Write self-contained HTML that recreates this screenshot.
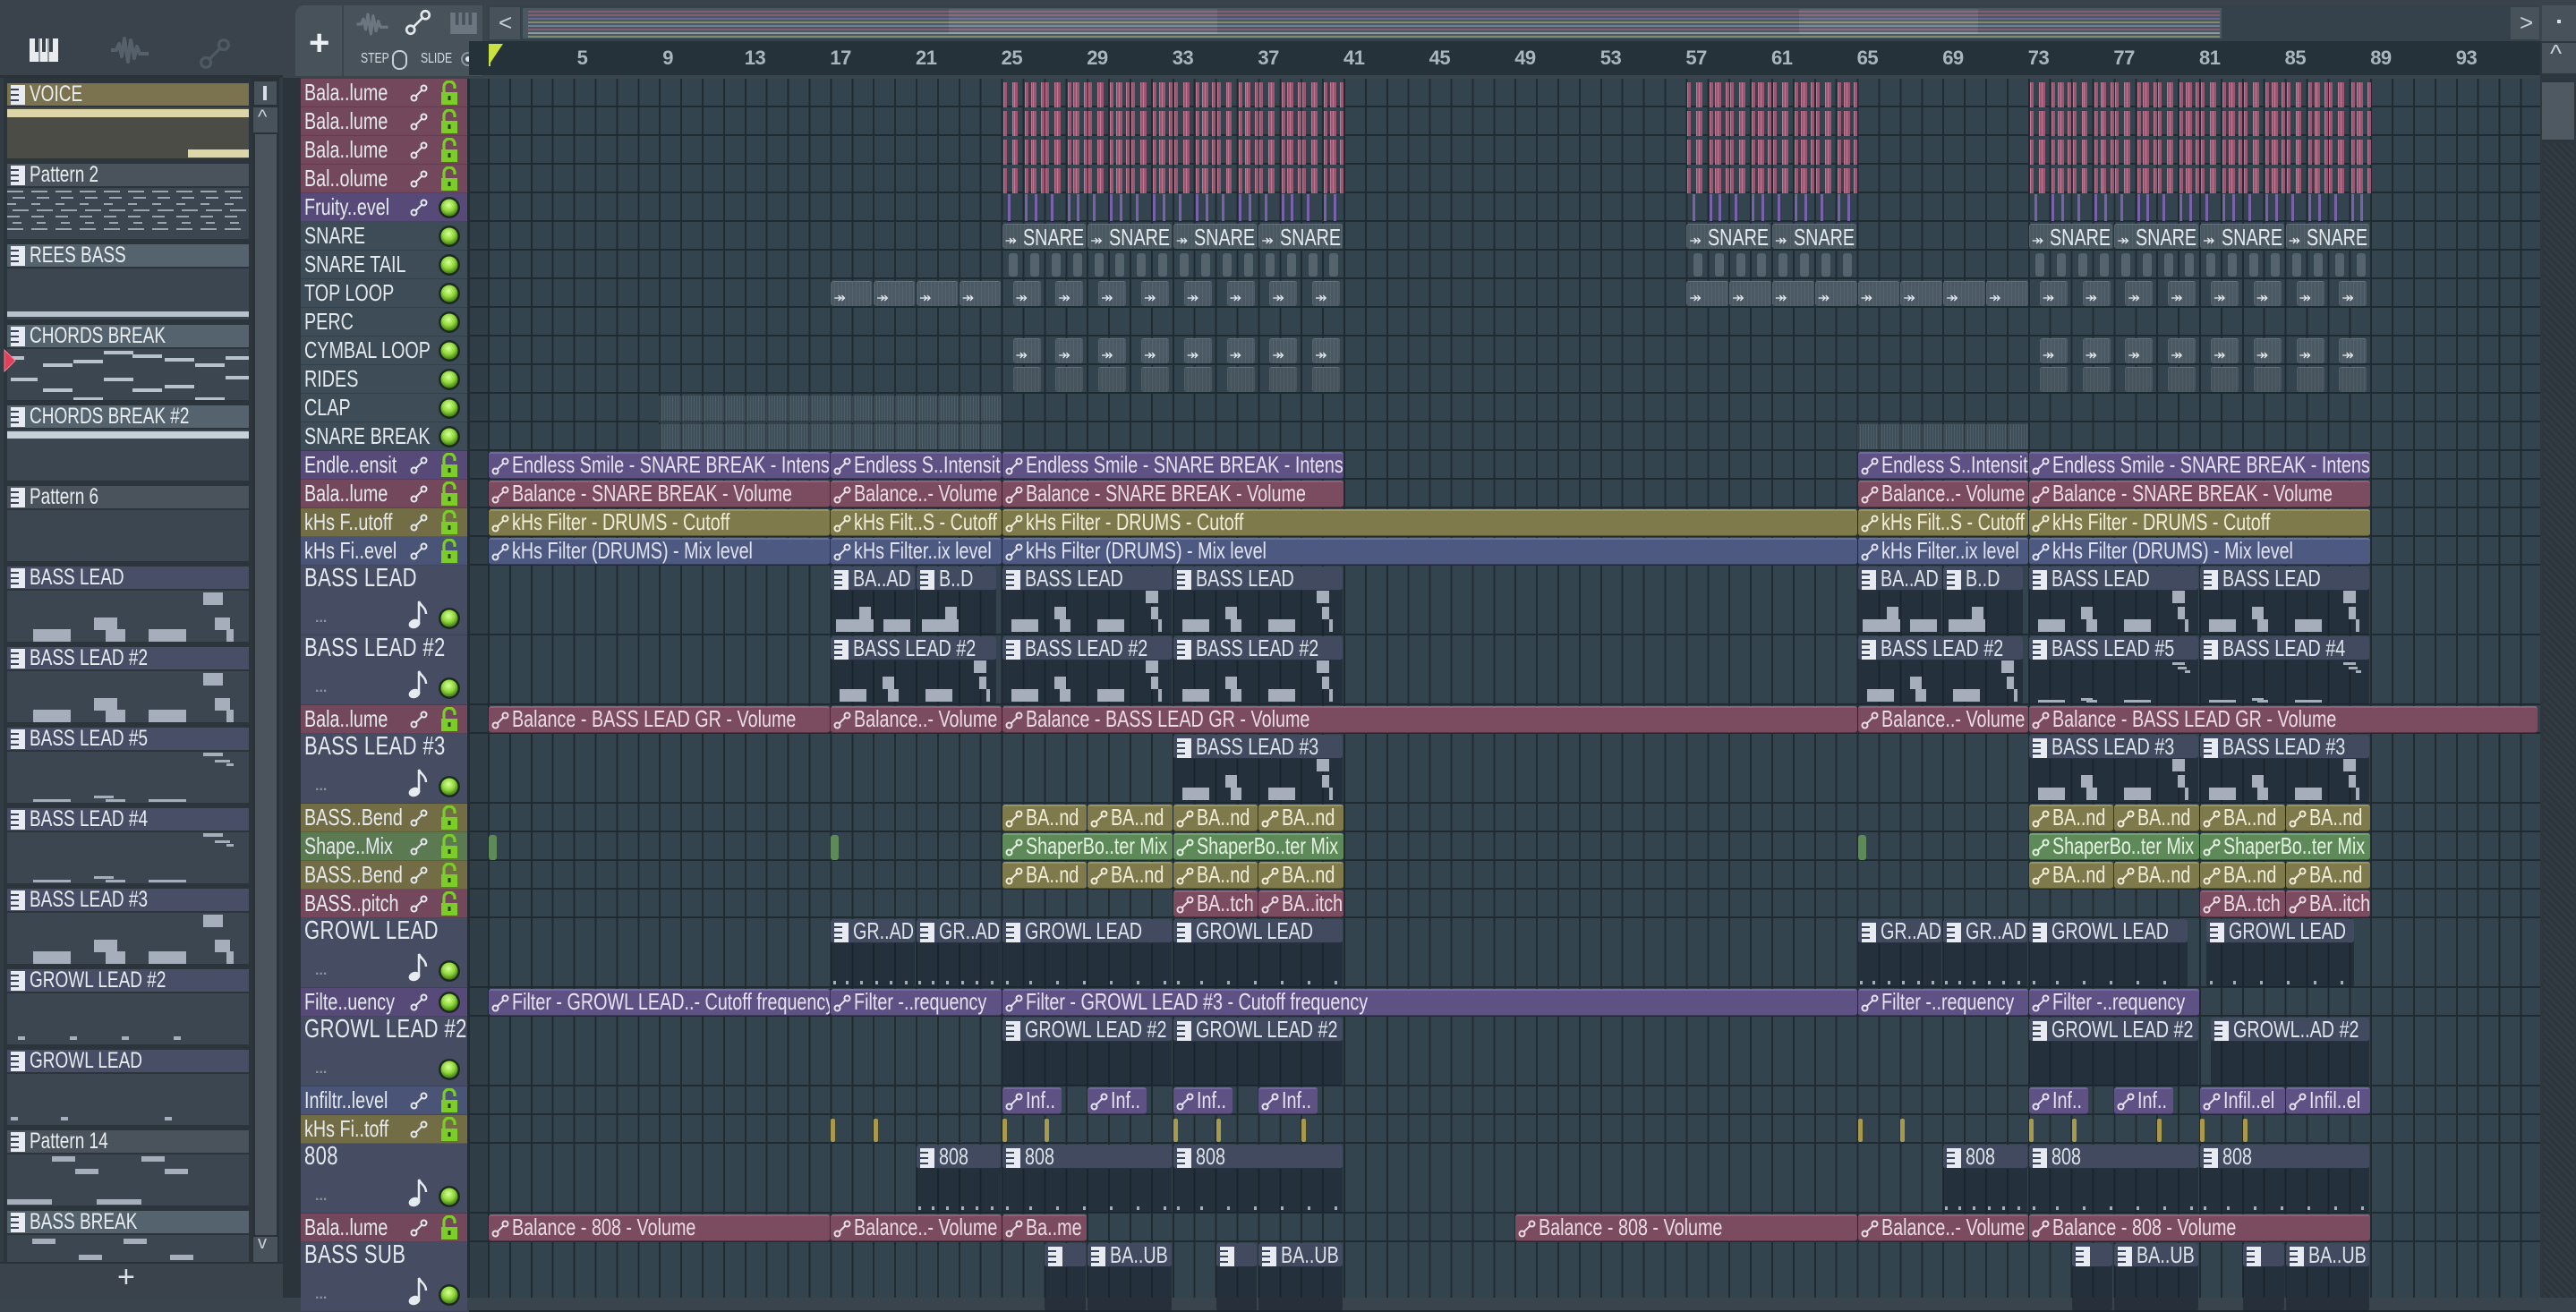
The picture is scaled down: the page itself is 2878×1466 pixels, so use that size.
<!DOCTYPE html>
<html><head><meta charset="utf-8">
<style>
*{box-sizing:border-box;margin:0;padding:0}
body{width:2878px;height:1450px;overflow:hidden;background:#3a444c;font-family:"Liberation Sans Narrow","Liberation Sans",sans-serif;color:#dfe5ea;position:relative}
.a{position:absolute}
.n{display:inline-block;transform:scaleX(.76);transform-origin:0 50%;white-space:nowrap}
</style></head><body>
<div id="root"></div>
<script>
const R=document.getElementById('root');
function d(x,y,w,h,bg,extra){const e=document.createElement('div');e.className='a';e.style.cssText=`left:${x}px;top:${y}px;width:${w}px;height:${h}px;${bg?'background:'+bg+';':''}${extra||''}`;R.appendChild(e);return e;}
function txt(x,y,s,size,col,extra){const e=d(x,y,null,null,null,`font-size:${size}px;color:${col};white-space:nowrap;${extra||''}`);e.style.width='';e.style.height='';e.textContent=s;return e;}
function ntxt(x,y,s,size,col,extra){const e=txt(x,y,'',size,col,extra);e.innerHTML=`<span class="n">${s}</span>`;return e;}
const autoIco=(c)=>`<svg width="20" height="20" viewBox="0 0 20 20" style="vertical-align:-3px;margin-right:3px"><circle cx="4.5" cy="15.5" r="3" fill="none" stroke="${c}" stroke-width="2"/><circle cx="15.5" cy="4.5" r="3" fill="none" stroke="${c}" stroke-width="2"/><line x1="6.7" y1="13.3" x2="13.3" y2="6.7" stroke="${c}" stroke-width="2"/></svg>`;
const patIco=`<svg width="16" height="22" viewBox="0 0 16 22" style="vertical-align:-4px;margin-right:5px"><rect x="0" y="0" width="16" height="22" fill="#e8ecf2"/><rect x="0" y="4" width="9" height="2" fill="#3a4458"/><rect x="0" y="10" width="9" height="2" fill="#3a4458"/><rect x="0" y="16" width="9" height="2" fill="#3a4458"/></svg>`;
const led=`<svg width="26" height="26" viewBox="0 0 26 26"><defs><radialGradient id="g" cx="45%" cy="35%" r="60%"><stop offset="0" stop-color="#d8ff9a"/><stop offset=".6" stop-color="#8ed83a"/><stop offset="1" stop-color="#4f8a1a"/></radialGradient></defs><circle cx="13" cy="13" r="12" fill="#1d2a22"/><circle cx="13" cy="13" r="9.5" fill="url(#g)"/></svg>`;
const lock=`<svg width="20" height="28" viewBox="0 0 20 28"><path d="M4 13V7a6 6 0 0 1 12 0v2" fill="none" stroke="#7ccc2a" stroke-width="3.2"/><rect x="1" y="13" width="18" height="14" fill="#7ccc2a"/><rect x="8.5" y="17" width="3" height="5" fill="#2a3a20"/></svg>`;
const note=`<svg width="22" height="34" viewBox="0 0 22 34"><ellipse cx="7" cy="27" rx="6.5" ry="5" fill="#e6ebef" transform="rotate(-20 7 27)"/><path d="M12 27V2c2 5 8 7 8 14" fill="none" stroke="#e6ebef" stroke-width="2.5"/></svg>`;

d(0,0,334,85,'#3a434b');
d(0,84,316,3,'#2a3238');
R.insertAdjacentHTML('beforeend',`<svg class="a" style="left:33px;top:43px" width="32" height="26" viewBox="0 0 32 26"><rect width="32" height="26" fill="#e8ecef"/><rect x="6" y="0" width="4" height="15" fill="#3a434b"/><rect x="14" y="0" width="4" height="15" fill="#3a434b"/><rect x="22" y="0" width="4" height="15" fill="#3a434b"/><rect x="10.5" y="0" width="1" height="26" fill="#3a434b"/><rect x="20.5" y="0" width="1" height="26" fill="#3a434b"/></svg>`);
R.insertAdjacentHTML('beforeend',`<svg class="a" style="left:122px;top:38px" width="46" height="36" viewBox="0 0 46 36"><path d="M2 18h6l3-7 3 14 3-20 4 26 3-24 4 20 3-13 3 8h10" fill="none" stroke="#55606a" stroke-width="4" stroke-linejoin="round"/></svg>`);
R.insertAdjacentHTML('beforeend',`<svg class="a" style="left:222px;top:42px" width="36" height="36" viewBox="0 0 20 20"><circle cx="4.5" cy="15.5" r="3" fill="none" stroke="#4e5962" stroke-width="1.8"/><circle cx="15.5" cy="4.5" r="3" fill="none" stroke="#4e5962" stroke-width="1.8"/><line x1="6.7" y1="13.3" x2="13.3" y2="6.7" stroke="#4e5962" stroke-width="1.8"/></svg>`);

d(0,87,316,1325,'#323c44');
d(4,87,278,1323,'#2c353c');
const pats=[['VOICE','sel'],['Pattern 2','dash'],['REES BASS','rees'],['CHORDS BREAK','ch'],['CHORDS BREAK #2','line'],['Pattern 6','none'],['BASS LEAD','bl'],['BASS LEAD #2','bl'],['BASS LEAD #5','thin'],['BASS LEAD #4','thin'],['BASS LEAD #3','bl'],['GROWL LEAD #2','dots'],['GROWL LEAD','dots2'],['Pattern 14','p14'],['BASS BREAK','bb']];
pats.forEach((p,i)=>{
  const y=93+i*90;
  if(y>1410)return;
  const sel=p[1]=='sel';
  const hbg=sel?'#7b7350':(['REES BASS','CHORDS BREAK','CHORDS BREAK #2','BASS BREAK'].includes(p[0])?'#55636f':(p[0].startsWith('Pattern')?'#4a535c':'#474e66'));
  const h=Math.min(25,1410-y);
  const hd=d(8,y,270,h,hbg,'font-size:25px;line-height:25px;padding-left:4px;color:#e8edf0;overflow:hidden;white-space:nowrap');
  hd.innerHTML=patIco+`<span class="n">${p[0]}</span>`;
  const by=y+27, bh=Math.min(57,1410-by);
  if(bh<=0)return;
  const body=d(8,by,270,bh,sel?'#4a4c45':'#3b4650','overflow:hidden');
  const bar=(x,yy,w,hh,c)=>{const e=document.createElement('div');e.className='a';e.style.cssText=`left:${x}px;top:${yy}px;width:${w}px;height:${hh}px;background:${c||'#a6aebb'}`;body.appendChild(e);};
  if(sel){bar(0,2,270,9,'#ddd6a8');bar(202,47,68,9,'#ddd6a8');}
  if(p[1]=='dash'){for(let r=0;r<7;r++)for(let k=0;k<10;k++)bar(k*27+(r%2)*6,3+r*7,18-(r%3)*4,2,'#9aa3ae');}
  if(p[1]=='rees'){bar(0,48,270,6,'#b7c2cc');}
  if(p[1]=='ch'){const pos=[[4,8,15],[40,16,33],[74,12,33],[108,2,33],[140,6,33],[176,10,33],[210,16,33],[244,8,26],[4,32,30],[108,32,33],[176,40,33],[244,30,26],[40,44,33],[140,44,33],[74,54,33],[210,54,33]];pos.forEach(q=>bar(q[0],q[1],q[2],4,'#b7c2cc'));}
  if(p[1]=='line'){bar(0,2,270,8,'#c8d1d8');}
  if(p[1]=='bl'){bar(29,43,42,14);bar(97,30,26,14);bar(110,43,22,14);bar(158,43,42,14);bar(219,2,22,14);bar(232,30,17,14);bar(245,43,8,14);}
  if(p[1]=='thin'){bar(219,1,22,4);bar(232,9,17,3);bar(245,13,8,3);bar(29,53,42,3);bar(97,49,22,3);bar(110,53,22,3);bar(158,53,42,3);}
  if(p[1]=='dots'){[12,70,128,186].forEach(x=>bar(x,48,8,4));}
  if(p[1]=='dots2'){[4,60,176].forEach(x=>bar(x,48,8,4));}
  if(p[1]=='p14'){bar(50,2,26,6);bar(150,2,26,6);bar(76,16,26,6);bar(176,16,26,6);bar(0,50,50,6);bar(100,50,50,6);}
  if(p[1]=='bb'){bar(28,4,26,6);bar(130,4,26,6);bar(80,22,26,6);bar(182,22,26,6);}
});
R.insertAdjacentHTML('beforeend',`<svg class="a" style="left:4px;top:390px" width="14" height="26"><path d="M1 1L13 13L1 25Z" fill="#e0405a" stroke="#f08090"/></svg>`);
d(282,87,30,1323,'#2a3238');
d(283,90,27,28,'#48525b','border:1px solid #2a3238');d(294,96,4,16,'#dde');
d(283,120,27,28,'#48525b');txt(288,118,'^',22,'#c8d0d6');
d(285,150,24,1230,'#4b545c');
d(283,1382,27,28,'#48525b');txt(288,1378,'v',20,'#c8d0d6');
d(0,1410,316,40,'#3a434b','border-top:2px solid #2a3238');
txt(131,1408,'+',34,'#dbe1e6');
d(316,87,20,1363,'#2b343b');

d(316,0,2562,6,'#3a434b');
d(330,6,52,79,'#48525b','border-radius:10px 0 0 0');
txt(345,26,'+',40,'#eef1f4','font-weight:bold');
d(384,6,155,79,'#48525b');
R.insertAdjacentHTML('beforeend',`<svg class="a" style="left:396px;top:12px" width="40" height="30" viewBox="0 0 46 36"><path d="M2 18h6l3-7 3 14 3-20 4 26 3-24 4 20 3-13 3 8h10" fill="none" stroke="#6b7680" stroke-width="4" stroke-linejoin="round"/></svg>`);
R.insertAdjacentHTML('beforeend',`<svg class="a" style="left:452px;top:10px" width="30" height="30" viewBox="0 0 20 20"><circle cx="4.5" cy="15.5" r="3" fill="none" stroke="#e2e7eb" stroke-width="1.8"/><circle cx="15.5" cy="4.5" r="3" fill="none" stroke="#e2e7eb" stroke-width="1.8"/><line x1="6.7" y1="13.3" x2="13.3" y2="6.7" stroke="#e2e7eb" stroke-width="1.8"/></svg>`);
R.insertAdjacentHTML('beforeend',`<svg class="a" style="left:503px;top:14px" width="30" height="24" viewBox="0 0 32 26"><rect width="32" height="26" fill="#6b7680"/><rect x="6" y="0" width="4" height="15" fill="#48525b"/><rect x="14" y="0" width="4" height="15" fill="#48525b"/><rect x="22" y="0" width="4" height="15" fill="#48525b"/></svg>`);
ntxt(403,57,'STEP',16,'#d6dde2');d(438,56,17,22,null,'border:2px solid #c8d0d6;border-radius:8px');
ntxt(470,57,'SLIDE',16,'#d6dde2');d(515,58,16,16,null,'border:2px solid #8a949c;border-radius:50%');d(520,63,6,6,'#dfe5ea','border-radius:50%');
d(545,6,2293,40,'#36424b');
d(547,8,34,36,'#48525b');txt(557,10,'<',26,'#c8d0d6');
d(2805,8,32,36,'#48525b');txt(2815,10,'>',26,'#c8d0d6');
d(2840,6,38,40,'#48525b');d(2857,22,4,4,'#dde');
d(584,9,1898,34,'#4a5861');
const ovc=['#a0607a','#a0607a','#7a6aa8','#a0a070','#8090b0','#a0607a','#a8b4c0','#9aa070'];
for(let k=0;k<8;k++){d(590,12+k*4,1890,2,ovc[k],'opacity:.7');}
d(1060,10,300,28,'rgba(255,255,255,.07)');d(2010,10,200,28,'rgba(255,255,255,.07)');
d(545,46,2293,38,'#26323a');
d(524,46,21,38,'#26323a');
const B=23.9,X0=545;const bx=b=>X0+(b-1)*B;
for(let n=5;n<=93;n+=4){txt(bx(n)+(n<10?4:0),52,String(n),22,'#aab5be','font-weight:bold;font-family:"Liberation Sans",sans-serif;letter-spacing:-0.5px');}
R.insertAdjacentHTML('beforeend',`<svg class="a" style="left:545px;top:48px" width="20" height="26"><path d="M1 1h16L3 22Z" fill="#c8e040"/><line x1="2" y1="1" x2="2" y2="26" stroke="#c8e040" stroke-width="2"/></svg>`);
d(2838,46,40,1404,'#2e373e');
d(2840,48,38,34,'#48525b');txt(2849,44,'^',28,'#c8d0d6');
d(2840,92,36,64,'#4f5961');
d(2842,160,34,1290,'repeating-linear-gradient(45deg,#323b42 0 3px,#2c353b 3px 6px)');

const rows=[
['Bala..lume','pink',0,'lock'],['Bala..lume','pink',0,'lock'],['Bala..lume','pink',0,'lock'],['Bal..olume','pink',0,'lock'],['Fruity..evel','purp',0,'led'],
['SNARE','aud',0,'led'],['SNARE TAIL','aud',0,'led'],['TOP LOOP','aud',0,'led'],['PERC','aud',0,'led'],['CYMBAL LOOP','aud',0,'led'],['RIDES','aud',0,'led'],['CLAP','aud',0,'led'],['SNARE BREAK','aud',0,'led'],
['Endle..ensit','purp',0,'lock'],['Bala..lume','pink',0,'lock'],['kHs F..utoff','olive',0,'lock'],['kHs Fi..evel','blue',0,'lock'],
['BASS LEAD','pat',1,'led'],['BASS LEAD #2','pat',1,'led'],['Bala..lume','pink',0,'lock'],['BASS LEAD #3','pat',1,'led'],
['BASS..Bend','olive',0,'lock'],['Shape..Mix','green',0,'lock'],['BASS..Bend','olive',0,'lock'],['BASS..pitch','pink',0,'lock'],
['GROWL LEAD','pat',1,'led'],['Filte..uency','purp',0,'led'],['GROWL LEAD #2','pat',1,'led0'],['Infiltr..level','blue',0,'lock'],['kHs Fi..toff','olive',0,'lock'],
['808','pat',1,'led'],['Bala..lume','pink',0,'lock'],['BASS SUB','pat',1,'led']];
const HB={pink:'#74485c',purp:'#574a78',olive:'#736d45',blue:'#4a5477',green:'#5b7a52',aud:'#3d4c56',pat:'#464d63'};
const tops=[];let y=88;
rows.forEach(r=>{tops.push(y);y+=r[2]?78:32;});
d(524,88,2314,1362,'#2f3d47');
d(545,88,2293,1362,'#34444f','background-image:repeating-linear-gradient(90deg,#1f2a31 0 2px,transparent 2px 23.9px)');
rows.forEach((r,i)=>{d(524,tops[i]+(r[2]?78:32)-2,2314,2,'#1f2a31');});
d(522,88,3,1362,'#222c33');
rows.forEach((r,i)=>{
  const t=tops[i],h=r[2]?78:32;
  d(336,t,186,h,HB[r[1]],'border-bottom:1px solid rgba(0,0,0,.15)');
  if(r[2]){
    ntxt(340,t-2,r[0],29,'#e4e9ed','letter-spacing:.5px');
    txt(352,t+50,'...',16,'#8a94a0','font-weight:bold');
    if(r[3]!='led0')R.insertAdjacentHTML('beforeend',`<div class="a" style="left:456px;top:${t+38}px">${note}</div>`);
    R.insertAdjacentHTML('beforeend',`<div class="a" style="left:489px;top:${t+46}px">${led}</div>`);
  } else {
    ntxt(340,t,r[0],26,'#e4e9ed');
    if(r[1]!='aud')R.insertAdjacentHTML('beforeend',`<div class="a" style="left:458px;top:${t+6}px">${autoIco('#e4e9ed')}</div>`);
    if(r[3]=='lock')R.insertAdjacentHTML('beforeend',`<div class="a" style="left:492px;top:${t+2}px">${lock}</div>`);
    else R.insertAdjacentHTML('beforeend',`<div class="a" style="left:489px;top:${t+3}px">${led}</div>`);
  }
});
const CC={pink:['#7b4b5f','#955e76','#e9dce3'],purp:['#5d5283','#7466a0','#e6e2f2'],olive:['#7f7a4c','#9a945e','#f0edd8'],blue:['#4e5981','#65719c','#e0e4f2'],green:['#5d8a58','#74a46e','#e4f2e2']};
function ac(ri,b1,b2,col,label){const x=bx(b1),w=bx(b2)-x,t=tops[ri];const c=CC[col];
 const e=d(x+1,t+1,w-1,30,c[0],`border-top:2px solid ${c[1]};border-bottom:1px solid rgba(0,0,0,.3);border-radius:3px;overflow:hidden;white-space:nowrap;font-size:26px;line-height:25px;padding-left:3px;color:${c[2]}`);
 e.innerHTML=autoIco(c[2])+`<span class="n" style="vertical-align:top">${label}</span>`;}
function pc(ri,b1,b2,label,notes){const x=bx(b1),w=bx(b2)-x,t=tops[ri];
 d(x+1,t+1,w-2,76,'rgba(24,32,44,.55)','border-radius:3px;overflow:hidden');
 const hd=d(x+1,t+1,w-2,27,'#414a5e','border-radius:3px;border-bottom:1px solid #2a3040;overflow:hidden;white-space:nowrap;font-size:26px;line-height:27px;padding-left:4px;color:#dde3ea');
 hd.innerHTML=patIco+`<span class="n" style="vertical-align:top">${label}</span>`;
 if(notes){
  const pat=notes=='bl'?[[10,60,30,14],[58,46,13,14],[64,60,12,14],[106,60,30,14],[160,28,14,14],[166,46,8,14],[174,60,4,14]]:
   notes=='thin'?[[10,72,30,3],[58,70,13,3],[64,72,12,3],[106,72,30,3],[160,30,14,3],[166,35,10,3],[174,39,6,3]]:
   notes=='g'?[[4,70,3,4],[30,70,3,4],[60,70,3,4],[90,70,3,4],[120,70,3,4],[150,70,3,4],[180,70,3,4]]:[];
  for(let s=0;s<w;s+=193){pat.forEach(q=>{const xx=x+1+s+q[0]*(w>100?1:0.55);if(xx+q[2]<x+w-2)d(xx,t+q[1],q[2],q[3],'#a6aebc');});if(w<193)break;}
 }}
function au(ri,b1,w,label,col){const x=bx(b1),t=tops[ri];const e=d(x+1,t+2,w,28,col||'#4a5964','border-radius:3px;border-top:1px solid #62717c;overflow:hidden;white-space:nowrap;font-size:26px;line-height:28px;padding-left:3px;color:#e4e9ed;background-image:repeating-linear-gradient(90deg,rgba(255,255,255,.06) 0 1px,transparent 1px 4px)');
 e.innerHTML=(label===undefined?'<span style="font-size:16px">&#x21a0;</span>':label);}
const ranges=[[25,41],[57,65],[73,89]];
ranges.forEach(([a,b])=>{for(let bar=a;bar<b;bar++){
  const offs=bar%2?[0.08,0.5,0.62]:[0.1,0.38,0.5,0.85];
  offs.forEach(o=>{for(let r=0;r<4;r++)d(bx(bar)+o*B,tops[r]+4,4,28,'#9c5672','border-left:1px solid #c07890');});
  if(bar%2==0)[0.1,0.55].forEach(o=>d(bx(bar)+o*B,tops[4]+1,3,30,'#7a62aa'));
  else d(bx(bar)+0.3*B,tops[4]+1,3,30,'#7a62aa');
 }});
[[25,29],[29,33],[33,37],[37,41],[57,61],[61,65],[73,77],[77,81],[81,85],[85,89]].forEach(([a,b])=>au(5,a,bx(b)-bx(a)-2,'<span style="font-size:16px">&#x21a0;</span> <span class="n" style="vertical-align:top">SNARE</span>','#4a5862'));
ranges.forEach(([a,b])=>{for(let bar=a;bar<b;bar++)d(bx(bar)+B*0.35,tops[6]+3,10,26,'#55636d','border-radius:3px');});
for(let b=17;b<25;b+=2)au(7,b,2*B-2);
[[25,41],[73,89]].forEach(([a,c])=>{for(let b=a;b<c;b+=2)au(7,b+0.5,1.3*B);});
for(let b=57;b<65;b+=2)au(7,b,2*B-1);
for(let b=65;b<73;b+=2)au(7,b,2*B-1);
[[25,41],[73,89]].forEach(([a,c])=>{for(let b=a;b<c;b+=2){au(9,b+0.5,1.3*B);au(10,b+0.5,1.3*B,'','#46545e');}});
const faint='rgba(255,255,255,.06)',fb='background-image:repeating-linear-gradient(90deg,rgba(255,255,255,.08) 0 1px,transparent 1px 3px)';
d(bx(9),tops[11]+2,bx(25)-bx(9),30,faint,fb);
d(bx(9),tops[12]+2,bx(25)-bx(9),28,faint,fb);
d(bx(65),tops[12]+2,bx(73)-bx(65),28,faint,fb);
const E='Endless Smile - SNARE BREAK - Intensit';
[[1,17,E],[17,25,'Endless S..Intensit'],[25,41,E],[65,73,'Endless S..Intensit'],[73,89,E]].forEach(q=>ac(13,q[0],q[1],'purp',q[2]));
[[1,17,'Balance - SNARE BREAK - Volume'],[17,25,'Balance..- Volume'],[25,41,'Balance - SNARE BREAK - Volume'],[65,73,'Balance..- Volume'],[73,89,'Balance - SNARE BREAK - Volume']].forEach(q=>ac(14,q[0],q[1],'pink',q[2]));
[[1,17,'kHs Filter - DRUMS - Cutoff'],[17,25,'kHs Filt..S - Cutoff'],[25,65,'kHs Filter - DRUMS - Cutoff'],[65,73,'kHs Filt..S - Cutoff'],[73,89,'kHs Filter - DRUMS - Cutoff']].forEach(q=>ac(15,q[0],q[1],'olive',q[2]));
[[1,17,'kHs Filter (DRUMS) - Mix level'],[17,25,'kHs Filter..ix level'],[25,65,'kHs Filter (DRUMS) - Mix level'],[65,73,'kHs Filter..ix level'],[73,89,'kHs Filter (DRUMS) - Mix level']].forEach(q=>ac(16,q[0],q[1],'blue',q[2]));
[[17,21,'BA..AD'],[21,24.8,'B..D'],[25,33,'BASS LEAD'],[33,41,'BASS LEAD'],[65,69,'BA..AD'],[69,72.8,'B..D'],[73,81,'BASS LEAD'],[81,89,'BASS LEAD']].forEach(q=>pc(17,q[0],q[1],q[2],'bl'));
[[17,24.8,'BASS LEAD #2','bl'],[25,33,'BASS LEAD #2','bl'],[33,41,'BASS LEAD #2','bl'],[65,72.8,'BASS LEAD #2','bl'],[73,81,'BASS LEAD #5','thin'],[81,89,'BASS LEAD #4','thin']].forEach(q=>pc(18,q[0],q[1],q[2],q[3]));
[[1,17,'Balance - BASS LEAD GR - Volume'],[17,25,'Balance..- Volume'],[25,65,'Balance - BASS LEAD GR - Volume'],[65,73,'Balance..- Volume'],[73,96.8,'Balance - BASS LEAD GR - Volume']].forEach(q=>ac(19,q[0],q[1],'pink',q[2]));
[[33,41],[73,81],[81,89]].forEach(q=>pc(20,q[0],q[1],'BASS LEAD #3','bl'));
[25,29,33,37,73,77,81,85].forEach(b=>{ac(21,b,b+4,'olive','BA..nd');ac(23,b,b+4,'olive','BA..nd');});
[25,33,73,81].forEach(b=>ac(22,b,b+8,'green','ShaperBo..ter Mix'));
[1,17,65].forEach(b=>d(bx(b)+1,tops[22]+3,9,28,'#5d8a58','border-radius:3px'));
[[33,'BA..tch'],[37,'BA..itch'],[81,'BA..tch'],[85,'BA..itch']].forEach(q=>ac(24,q[0],q[0]+4,'pink',q[1]));
[[17,21,'GR..AD'],[21,25,'GR..AD'],[25,33,'GROWL LEAD'],[33,41,'GROWL LEAD'],[65,69,'GR..AD'],[69,73,'GR..AD'],[73,80.5,'GROWL LEAD'],[81.3,88.3,'GROWL LEAD']].forEach(q=>pc(25,q[0],q[1],q[2],'g'));
[[1,17,'Filter - GROWL LEAD..- Cutoff frequency'],[17,25,'Filter -..requency'],[25,65,'Filter - GROWL LEAD #3 - Cutoff frequency'],[65,73,'Filter -..requency'],[73,81,'Filter -..requency']].forEach(q=>ac(26,q[0],q[1],'purp',q[2]));
[[25,33,'GROWL LEAD #2'],[33,41,'GROWL LEAD #2'],[73,81,'GROWL LEAD #2'],[81.5,89,'GROWL..AD #2']].forEach(q=>pc(27,q[0],q[1],q[2],null));
[[25,'Inf..'],[29,'Inf..'],[33,'Inf..'],[37,'Inf..'],[73,'Inf..'],[77,'Inf..']].forEach(q=>ac(28,q[0],q[0]+2.8,'purp',q[1]));
[[81,'Infil..el'],[85,'Infil..el']].forEach(q=>ac(28,q[0],q[0]+4,'purp',q[1]));
[17,19,25,27,33,35,39,65,67,73,75,79,81,83].forEach(b=>d(bx(b)+1,tops[29]+4,5,26,'#a89a4a','border-radius:2px'));
[[21,25],[25,33],[33,41],[69,73],[73,81],[81,89]].forEach(q=>pc(30,q[0],q[1],'808','g'));
[[1,17,'Balance - 808 - Volume'],[17,25,'Balance..- Volume'],[25,29,'Ba..me'],[49,65,'Balance - 808 - Volume'],[65,73,'Balance..- Volume'],[73,89,'Balance - 808 - Volume']].forEach(q=>ac(31,q[0],q[1],'pink',q[2]));
[[27,29,''],[29,33,'BA..UB'],[35,37,''],[37,41,'BA..UB'],[75,77,''],[77,81,'BA..UB'],[83,85,''],[85,89,'BA..UB']].forEach(q=>pc(32,q[0],q[1],q[2],null));
</script>
</body></html>
